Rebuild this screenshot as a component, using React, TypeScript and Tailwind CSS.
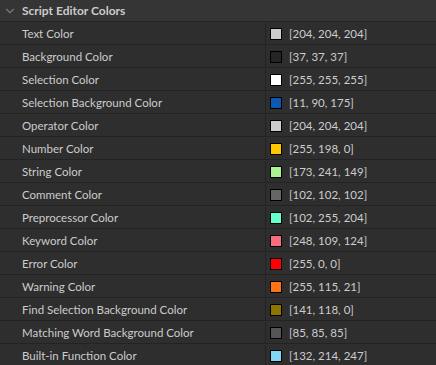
import { ChevronDown } from 'lucide-react'

const rows: [string, number[]][] = [
  ['Text Color', [204, 204, 204]],
  ['Background Color', [37, 37, 37]],
  ['Selection Color', [255, 255, 255]],
  ['Selection Background Color', [11, 90, 175]],
  ['Operator Color', [204, 204, 204]],
  ['Number Color', [255, 198, 0]],
  ['String Color', [173, 241, 149]],
  ['Comment Color', [102, 102, 102]],
  ['Preprocessor Color', [102, 255, 204]],
  ['Keyword Color', [248, 109, 124]],
  ['Error Color', [255, 0, 0]],
  ['Warning Color', [255, 115, 21]],
  ['Find Selection Background Color', [141, 118, 0]],
  ['Matching Word Background Color', [85, 85, 85]],
  ['Built-in Function Color', [132, 214, 247]]
]

export default function App() {
  return (
    <div
      className="w-[436px] h-[365px] overflow-hidden bg-[#2e2e2e] text-[11.5px] text-[#cccccc]"
      style={{ fontFamily: '"Lato", "Noto Sans", sans-serif' }}
    >
      {/* HEADER */}
      <div className="flex h-[22px] items-center bg-[#353535] border-b border-[#232323]">
        <ChevronDown className="ml-[3px] h-[14px] w-[14px] text-[#7a7a7a]" strokeWidth={2} />
        <span className="ml-[5px] text-[12px] font-bold text-[#cccccc]">Script Editor Colors</span>
      </div>

      {/* ROWS */}
      {rows.map(([label, rgb]) => (
        <div key={label} className="flex h-[23px] pt-[1px] border-b border-[#232323]">
          <div className="flex w-[266px] items-center pl-[22px] border-r border-[#232323]">
            {label}
          </div>
          <div className="flex items-center pl-[4px]">
            <span
              className="h-[12px] w-[12px] border border-black"
              style={{ backgroundColor: `rgb(${rgb.join(',')})` }}
            />
            <span className="ml-[7px]">[{rgb.join(', ')}]</span>
          </div>
        </div>
      ))}
    </div>
  )
}
